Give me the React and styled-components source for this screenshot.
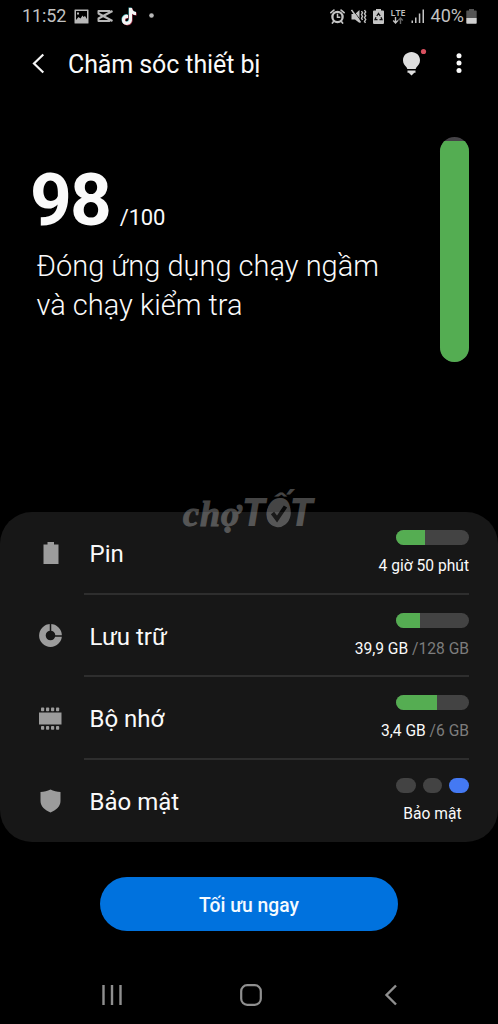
import React from 'react';
import styled, { createGlobalStyle } from 'styled-components';

const Global = createGlobalStyle`
  *, *::before, *::after { box-sizing: border-box; }
  html, body { margin: 0; background: #000; }
  body { font-family: Roboto, "Noto Sans", sans-serif; color: #fafafa; }
  svg { display: block; flex: none; }
`;

const Screen = styled.main`
  width: 498px;
  height: 1024px;
  display: flex;
  flex-direction: column;
  background: #000;
  overflow: hidden;
`;

const StatusBar = styled.div`
  height: 32px;
  padding: 0 21px 0 22px;
  display: flex;
  justify-content: space-between;
  align-items: center;
  color: #c2c2c2;
`;

const StatusGroup = styled.div`
  display: flex;
  align-items: center;
  gap: ${(p) => p.$gap}px;
`;

const StatusText = styled.span`
  font-size: 18px;
  line-height: 32px;
  letter-spacing: ${(p) => p.$spacing || 0}px;
  margin-right: ${(p) => p.$after || 0}px;
  white-space: nowrap;
`;

const NetworkLabel = styled.div`
  width: 15px;
  display: flex;
  flex-direction: column;
  align-items: center;
  font: 600 9px/9px "Open Sans", sans-serif;
  margin: -1px -1px 0 1px;
`;

const Header = styled.header`
  height: 64px;
  padding: 0 36px 0 31px;
  display: flex;
  align-items: center;
`;

const Title = styled.h1`
  margin: 1px auto 0 22px;
  font-size: 25px;
  line-height: 32px;
  font-weight: 400;
  letter-spacing: -0.1px;
  white-space: nowrap;
`;

const Tips = styled.div`
  margin: -2px 28px 0 0;
`;

const Summary = styled.section`
  height: 416px;
  padding: 41px 29px 0 30px;
  display: flex;
  justify-content: space-between;
  align-items: flex-start;
`;

const ScoreBlock = styled.div`
  padding-top: 21px;
`;

const Score = styled.div`
  display: flex;
  align-items: baseline;
  gap: 10px;
  height: 88px;
  line-height: 84px;
`;

const ScoreValue = styled.span`
  font-size: 73px;
  font-weight: 700;
  letter-spacing: -2px;
`;

const ScoreTotal = styled.span`
  font-size: 22px;
  letter-spacing: -0.2px;
`;

const Advice = styled.p`
  margin: 1px 0 0 6.5px;
  font-size: 29px;
  line-height: 39px;
  font-weight: 300;
  white-space: nowrap;
`;

const Gauge = styled.div`
  width: 29px;
  height: 225px;
  padding-top: 4px;
  border-radius: 15px;
  overflow: hidden;
  background: #454347;
`;

const GaugeFill = styled.div`
  height: 100%;
  background: #54ad52;
`;

const Panel = styled.section`
  position: relative;
  height: 330px;
  border-radius: 32px;
  background: #171717;
`;

const Row = styled.div`
  height: 82.5px;
  padding-right: 29px;
  display: flex;
`;

const IconCell = styled.div`
  width: 84px;
  padding-left: 17px;
  display: flex;
  align-items: center;
  justify-content: center;
  color: #9c9c9c;
`;

const RowBody = styled.div`
  flex: 1;
  display: flex;
  justify-content: space-between;
  padding-left: 5.5px;
  border-bottom: ${(p) => (p.$last ? '0' : '2px solid #2e2e2e')};
`;

const RowLabel = styled.span`
  font-size: 24px;
  line-height: 84px;
`;

const Stat = styled.div`
  display: flex;
  flex-direction: column;
  align-items: ${(p) => (p.$center ? 'center' : 'flex-end')};
  padding-top: 18px;
`;

const Meter = styled.div`
  width: 73px;
  height: 15px;
  border-radius: 8px;
  overflow: hidden;
  background: #434343;
`;

const MeterFill = styled.div`
  width: ${(p) => p.$width}px;
  height: 100%;
  background: #55ad52;
`;

const StatText = styled.span`
  margin-top: 11.4px;
  font-size: 15.6px;
  line-height: 20px;
  white-space: nowrap;
`;

const Muted = styled.span`
  color: #7d7d7d;
`;

const Pills = styled.div`
  display: flex;
  gap: 7px;
`;

const Pill = styled.span`
  width: 19.7px;
  height: 15px;
  border-radius: 8px;
  background: ${(p) => (p.$active ? '#4479f3' : '#434343')};
`;

const Watermark = styled.div`
  position: absolute;
  left: 182px;
  top: -29px;
  width: 140px;
  height: 56px;
  opacity: 0.27;
  color: #fff;
`;

const Word = styled.span`
  position: absolute;
  left: ${(p) => p.$x}px;
  top: ${(p) => p.$y}px;
  font: ${(p) => p.$font};
  -webkit-text-stroke: ${(p) => p.$stroke || 0}px #fff;
  letter-spacing: ${(p) => p.$spacing}px;
  white-space: nowrap;
`;

const CheckBadge = styled.svg`
  position: absolute;
  left: 82px;
  top: 9px;
`;

const Action = styled.button`
  align-self: center;
  width: 298px;
  height: 54px;
  margin: 35px 0 0;
  border: 0;
  border-radius: 27px;
  background: #0072de;
  color: #f5faff;
  font: 500 19.3px/54px Roboto, "Noto Sans", sans-serif;
  padding: 2px 0 0;
`;

const NavBar = styled.nav`
  height: 58px;
  margin-top: 35px;
  padding: 0 100px 0 101px;
  display: flex;
  align-items: center;
  justify-content: space-between;
`;

const HomeKey = styled.svg`
  margin-right: 4px;
`;

const PictureIcon = () => (
  <svg width="15" height="15" viewBox="0 0 15 15">
    <path fill="#b8b8b8" fillRule="evenodd" d="M1 .5h13q.5 0 .5.5v13q0 .5-.5.5H1q-.5 0-.5-.5V1Q.5.5 1 .5Zm1 1.500v9l2.500-3 2 1.500 2-3 1 1.500 1.500-1 2 3V2ZM3 3.500h2v2H3Z" />
  </svg>
);

const CutIcon = () => (
  <svg width="16" height="14" viewBox="0 0 16 14" fill="none" stroke="#b8b8b8" strokeWidth="2" strokeLinejoin="round">
    <path d="M15.500 2 1.500 9.500V12H12.500V10.500" />
    <path d="M15.500 12 1.500 4.500V2H12.500V3.500" />
  </svg>
);

const NoteIcon = () => {
  const note = 'M8 1h3c.2 2.300 1.700 3.900 4 4.100v3c-1.500 0-2.800-.5-4-1.300v5.700c0 7-10 7.300-10 .5 0-3.500 2.700-5.600 6-5.100v3.200c-1.600-.5-3 .3-3 1.800 0 2.600 4 2.400 4-.7Z';
  return (
    <svg width="17" height="19" viewBox="0 0 17 19">
      <path d={note} fill="#4ab9bd" transform="translate(-.5 -.5)" />
      <path d={note} fill="#b23a52" transform="translate(.6 .5)" />
      <path d={note} fill="#f5f5f5" />
    </svg>
  );
};

const DotIcon = () => (
  <svg width="8" height="6"><circle cx="5.500" cy="2.500" r="2.300" fill="#b8b8b8" /></svg>
);

const AlarmIcon = () => (
  <svg width="15" height="15" viewBox="0 0 15 15" fill="none" stroke="#c4c4c4" strokeLinecap="round">
    <circle cx="7.500" cy="8" r="5.100" strokeWidth="2.300" />
    <path d="M.900 3.700 3.900 1.100M14.100 3.700l-3-2.600M3.800 12.300 2.400 14M11.200 12.300l1.400 1.700" strokeWidth="1.700" />
    <path d="M7.500 5.300v3h2.200" strokeWidth="1.500" />
  </svg>
);

const VibrateMuteIcon = () => (
  <svg width="16" height="15" viewBox="0 0 16 15">
    <path fill="#c4c4c4" d="M.500 5H4l4.500-4v13L4 10.500H.500Z" />
    <path d="m1.500 .500 9 12" stroke="#000" strokeWidth=".8" />
    <path d="M.500 1 9.500 13.500" stroke="#c4c4c4" strokeWidth="1.500" />
    <path d="m10.500 2 1 1.800-1 1.800 1 1.800-1 1.800 1 1.800M13.500 1l1.200 1.900-1.200 1.900 1.200 1.900-1.200 1.900 1.200 1.900-1.200 1.900 1 1.400" fill="none" stroke="#c4c4c4" strokeWidth="1.400" />
  </svg>
);

const BatterySaverIcon = () => (
  <svg width="11" height="15" viewBox="0 0 11 15">
    <path fill="#c4c4c4" d="M3 0h5v1.500h2q1 0 1 1V14q0 1-1 1H1q-1 0-1-1V2.500q0-1 1-1h2Z" />
    <path d="M3.800 7 5.500 4.500 7.200 7M8 8.200 9 10.700H6.500M4.500 10.700H2L3 8.200" fill="none" stroke="#111" strokeWidth="1.300" />
  </svg>
);

const DataArrows = () => (
  <svg width="12" height="7" viewBox="0 0 12 7" fill="none" strokeWidth="1.400">
    <path d="M3.500 0v6M1.200 3.500 3.500 6l2.300-2.500" stroke="#c4c4c4" />
    <path d="M8.500 7V1M6.200 3.500 8.500 1l2.300 2.500" stroke="#666" />
  </svg>
);

const SignalIcon = () => (
  <svg width="14" height="14" viewBox="0 0 14 14">
    <path fill="#c4c4c4" d="M.500 11.500h1.500V14H.500ZM4 8.500h1.500V14H4ZM7.800 4.500h1.500V14H7.800ZM11.500 .500H13V14h-1.500Z" />
  </svg>
);

const BatteryLevelIcon = () => (
  <svg width="11" height="15" viewBox="0 0 11 15">
    <path fill="#555" d="M3 0h5v1.500h2q.7 0 .7.700V9H.300V2.200q0-.7.700-.7h2Z" />
    <path fill="#d0d0d0" d="M.300 9h10.400v5q0 .7-.7.700H1q-.7 0-.7-.7Z" />
  </svg>
);

const BackIcon = () => (
  <svg width="15" height="22" viewBox="0 0 15 22">
    <path d="M12.300 1.500 3 10.500l9.300 9" fill="none" stroke="#f5f5f5" strokeWidth="2.200" />
  </svg>
);

const BulbIcon = () => (
  <svg width="26" height="30" viewBox="0 0 26 30">
    <path fill="#dedede" d="M9.500 4C4.800 4 1 7.600 1 12.200c0 3.300 1.700 4.800 3.500 7 .7.900.8 1.800.8 1.800h8.400s.1-.9.800-1.800c1.800-2.200 3.500-3.700 3.500-7C18 7.600 14.200 4 9.500 4ZM5.500 22.500h8v2.200h-1.200L9.500 27.500l-2.800-2.800H5.500Z" />
    <circle cx="21.500" cy="3.500" r="2.600" fill="#d9505f" />
  </svg>
);

const MoreIcon = () => (
  <svg width="6" height="22" viewBox="0 0 6 22" fill="#fafafa">
    <circle cx="3" cy="2.700" r="2.500" /><circle cx="3" cy="10.100" r="2.500" /><circle cx="3" cy="17.600" r="2.500" />
  </svg>
);

const BatteryIcon = () => (
  <svg width="16" height="22" viewBox="0 0 16 22"><path fill="currentColor" d="M4.500 0h6.500v2.500H15.500V22H.5V2.500h4Z" /></svg>
);

const StorageIcon = () => (
  <svg width="23" height="23" viewBox="0 0 23 23">
    <circle cx="11.500" cy="11.500" r="8.100" fill="none" stroke="currentColor" strokeWidth="6.600" />
    <path d="M11.500 7V0M16 12h7" stroke="#171717" strokeWidth="1.500" />
  </svg>
);

const MemoryIcon = () => (
  <svg width="23" height="23" viewBox="0 0 23 23" fill="currentColor">
    <path d="M0 5.500h22.500v12H0Z" />
    {[2, 7, 12, 17].map((x) => (
      <React.Fragment key={x}>
        <rect x={x} y="0.500" width="3.200" height="3.800" rx=".8" />
        <rect x={x} y="19" width="3.200" height="3.800" rx=".8" />
      </React.Fragment>
    ))}
  </svg>
);

const ShieldIcon = () => (
  <svg width="21" height="24" viewBox="0 0 21 24">
    <path fill="currentColor" d="M10.500.500C13.500 2 17 3 20.500 3v9c0 5.500-4.500 9.300-10 11.500C5 21.300.500 17.500.500 12V3c3.500 0 7-1 10-2.500Z" />
  </svg>
);

const rows = [
  { label: 'Pin', icon: <BatteryIcon />, fill: 29, value: '4 giờ 50 phút' },
  { label: 'Lưu trữ', icon: <StorageIcon />, fill: 24, value: '39,9 GB ', total: '/128 GB' },
  { label: 'Bộ nhớ', icon: <MemoryIcon />, fill: 41, value: '3,4 GB ', total: '/6 GB' },
  { label: 'Bảo mật', icon: <ShieldIcon />, value: 'Bảo mật' },
];

export default function App() {
  return (
    <Screen>
      <Global />
      <StatusBar>
        <StatusGroup $gap={7.8}>
          <StatusText $spacing={-0.1}>11:52</StatusText>
          <PictureIcon />
          <CutIcon />
          <NoteIcon />
          <DotIcon />
        </StatusGroup>
        <StatusGroup $gap={6}>
          <AlarmIcon />
          <VibrateMuteIcon />
          <BatterySaverIcon />
          <NetworkLabel>LTE<DataArrows /></NetworkLabel>
          <SignalIcon />
          <StatusText $after={-4}>40%</StatusText>
          <BatteryLevelIcon />
        </StatusGroup>
      </StatusBar>
      <Header>
        <BackIcon />
        <Title>Chăm sóc thiết bị</Title>
        <Tips><BulbIcon /></Tips>
        <MoreIcon />
      </Header>
      <Summary>
        <ScoreBlock>
          <Score>
            <ScoreValue>98</ScoreValue>
            <ScoreTotal>/100</ScoreTotal>
          </Score>
          <Advice>Đóng ứng dụng chạy ngầm<br />và chạy kiểm tra</Advice>
        </ScoreBlock>
        <Gauge><GaugeFill /></Gauge>
      </Summary>
      <Panel>
        {rows.map((row, i) => (
          <Row key={row.label}>
            <IconCell>{row.icon}</IconCell>
            <RowBody $last={i === rows.length - 1}>
              <RowLabel>{row.label}</RowLabel>
              <Stat $center={!row.fill}>
                {row.fill ? (
                  <Meter><MeterFill $width={row.fill} /></Meter>
                ) : (
                  <Pills><Pill /><Pill /><Pill $active /></Pills>
                )}
                <StatText>{row.value}{row.total && <Muted>{row.total}</Muted>}</StatText>
              </Stat>
            </RowBody>
          </Row>
        ))}
        <Watermark>
          <Word $x={1} $y={9} $spacing={1} $stroke={1} $font={'italic 700 36px/44px "Liberation Serif", serif'}>chợ</Word>
          <Word $x={60} $y={8} $spacing={0.6} $font={'italic 900 38px/44px Roboto, sans-serif'}>TỐT</Word>
          <CheckBadge width="30" height="36" viewBox="0 0 30 36">
            <ellipse cx="14.700" cy="21.500" rx="12" ry="13.800" fill="#fff" transform="rotate(10 15 21.500)" />
            <path d="m8.500 21 4.500 6L21.500 14.500" fill="none" stroke="#222" strokeWidth="4" />
          </CheckBadge>
        </Watermark>
      </Panel>
      <Action type="button">Tối ưu ngay</Action>
      <NavBar>
        <svg width="22" height="22" viewBox="0 0 22 22"><path d="M2.500 1v20M11 1v20M19.500 1v20" stroke="#8f8f8f" strokeWidth="2.400" /></svg>
        <HomeKey width="24" height="24" viewBox="0 0 24 24"><rect x="2.200" y="2.200" width="19.600" height="19.600" rx="6" fill="none" stroke="#8f8f8f" strokeWidth="2.200" /></HomeKey>
        <svg width="15" height="22" viewBox="0 0 15 22"><path d="M13 1.500 3.500 11l9.500 9.500" fill="none" stroke="#8f8f8f" strokeWidth="2.400" /></svg>
      </NavBar>
    </Screen>
  );
}
